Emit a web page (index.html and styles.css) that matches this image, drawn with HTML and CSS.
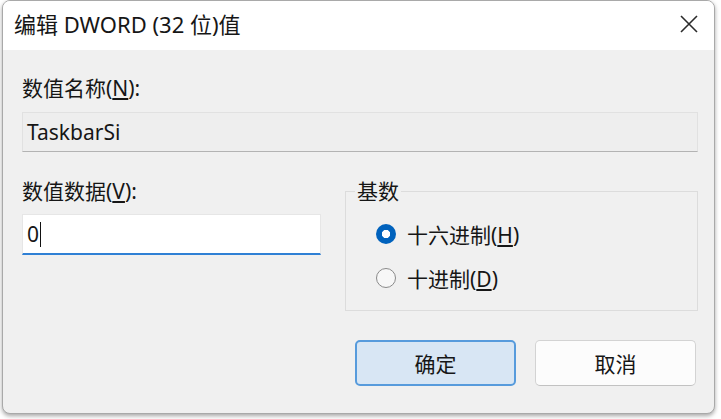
FILE: index.html
```html
<!DOCTYPE html>
<html lang="zh-CN">
<head>
    <meta charset="utf-8">
    <title>编辑 DWORD (32 位)值</title>
    <link rel="stylesheet" href="styles.css">
</head>
<body>
    <div class="window">
        <div class="titlebar">
            <span class="title">编辑 DWORD (32 位)值</span>
            <button type="button" class="close-button" aria-label="关闭">
                <svg width="18" height="18" viewBox="0 0 18 18">
                    <path d="M1 1 L17 17 M17 1 L1 17" stroke="#2b2b2b" stroke-width="1.6" fill="none"/>
                </svg>
            </button>
        </div>

        <div class="content">
            <div class="label">数值名称(<u>N</u>):</div>
            <div class="field field-readonly">TaskbarSi</div>

            <div class="middle">
                <div class="data-column">
                    <div class="label">数值数据(<u>V</u>):</div>
                    <div class="field field-edit">0<span class="caret"></span></div>
                </div>

                <fieldset class="base-group">
                    <legend>基数</legend>
                    <label class="radio-row">
                        <input type="radio" name="base" checked>
                        <span>十六进制(<u>H</u>)</span>
                    </label>
                    <label class="radio-row">
                        <input type="radio" name="base">
                        <span>十进制(<u>D</u>)</span>
                    </label>
                </fieldset>
            </div>

            <div class="buttons">
                <button type="button" class="dialog-button default-button">确定</button>
                <button type="button" class="dialog-button">取消</button>
            </div>
        </div>
    </div>
</body>
</html>
```

FILE: styles.css
```css
/* dialog window */
html, body {
    margin: 0;
    background-color: #ffffff;
}
body {
    font-family: "Noto Sans", "Noto Sans CJK SC", sans-serif;
    font-size: 21px;
    color: #161616;
    width: 721px;
    height: 419px;
    overflow: hidden;
}
.window {
    margin-left: 2px;
    width: 713px;
    height: 414px;
    box-sizing: border-box;
    border: 1px solid #a9a9a9;
    border-radius: 8px;
    background-color: #f0f0f0;
    box-shadow: 0 2px 4px rgba(0, 0, 0, 0.35);
    overflow: hidden;
}
.titlebar {
    height: 49px;
    background-color: #ffffff;
    display: flex;
    align-items: center;
    justify-content: space-between;
    padding: 0 0 4px 11px;
    box-sizing: border-box;
}
.title {
    font-size: 22px;
    line-height: 28px;
}
.close-button {
    border: none;
    background: none;
    padding: 0;
    margin-right: 16px;
    width: 18px;
    height: 18px;
    display: flex;
}

.content {
    padding: 25px 16px 0 19px;
}
.label {
    line-height: 26px;
    height: 26px;
}
.field {
    box-sizing: border-box;
    line-height: 26px;
    padding: 6px 4px;
}
.field-readonly {
    margin-top: 11px;
    height: 40px;
    background-color: #eeeeee;
    border: 1px solid #e1e1e1;
    border-bottom-color: #b3b3b3;
}
.middle {
    margin-top: 26px;
    display: grid;
    grid-template-columns: 299px 1fr;
    gap: 24px;
    align-items: start;
}
.field-edit {
    margin-top: 10px;
    height: 41px;
    background-color: #ffffff;
    border: 1px solid #e6e6e6;
    border-bottom: 2px solid #2f80d5;
    display: flex;
    align-items: center;
}
.caret {
    display: inline-block;
    width: 1px;
    height: 25px;
    margin-left: 1px;
    background-color: #111111;
}

.base-group {
    margin: 0;
    padding: 16px 10px 18px 9px;
    border: 1px solid #dcdcdc;
    min-width: 0;
}
.base-group legend {
    padding: 0 2px;
    line-height: 26px;
}
.radio-row {
    display: flex;
    align-items: center;
    gap: 11px;
    height: 28px;
    padding-left: 21px;
}
.radio-row + .radio-row {
    margin-top: 16px;
}
.radio-row input {
    appearance: none;
    margin: 0;
    width: 20px;
    height: 20px;
    border-radius: 50%;
    box-sizing: border-box;
    border: 1.5px solid #8a8a8a;
    background-color: #f7f7f7;
}
.radio-row input:checked {
    border: none;
    background: radial-gradient(circle, #ffffff 0 3.8px, #0062bd 4.5px);
}

.buttons {
    margin-top: 29px;
    display: flex;
    justify-content: flex-end;
    gap: 19px;
    padding-right: 2px;
}
.dialog-button {
    font-family: inherit;
    font-size: 21px;
    color: #161616;
    width: 161px;
    height: 46px;
    border-radius: 5px;
    border: 1px solid #d3d3d3;
    border-bottom-color: #c2c2c2;
    background-color: #fcfcfc;
}
.default-button {
    border: 2px solid #579bdc;
    background-color: #d8e6f4;
}
```
